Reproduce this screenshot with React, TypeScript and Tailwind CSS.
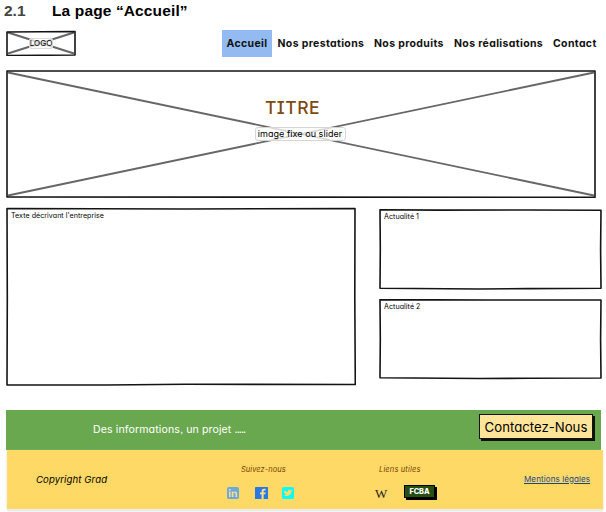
import type { ReactNode } from "react";

const hand = "font-['Inter','Lato',sans-serif] whitespace-nowrap";
const round = "[font-feature-settings:'cv11','ss03']";

type FrameProps = {
  w: number;
  h: number;
  outline: string;
  crossed?: boolean;
  className: string;
  children: ReactNode;
};

function Frame({ w, h, outline, crossed, className, children }: FrameProps) {
  return (
    <div className={`relative shrink-0 ${className}`}>
      <svg className="absolute inset-0" width={w} height={h} viewBox={`0 0 ${w} ${h}`} fill="none">
        {crossed && (
          <path d={`M2 2.5L${w - 2} ${h - 2.5}M2 ${h - 2.5}L${w - 2} 2.5`} stroke="#666" strokeWidth="1.9" />
        )}
        <path d={outline} stroke="#141414" strokeWidth="1.6" strokeLinejoin="round" />
      </svg>
      {children}
    </div>
  );
}

function Nav() {
  return (
    <nav className={`${hand} ${round} flex h-[27px] items-center text-[10.5px] font-bold tracking-[0.35px] text-[#111]`}>
      <a className="flex h-[27px] w-[50px] items-center justify-center bg-[#93bbf2]">Accueil</a>
      <a className="ml-[5.5px] w-[96.5px]">Nos prestations</a>
      <a className="w-[80px]">Nos produits</a>
      <a className="w-[99px]">Nos réalisations</a>
      <a className="w-[45px]">Contact</a>
    </nav>
  );
}

function Socials() {
  return (
    <div className="flex items-center">
      <svg width="12" height="12" viewBox="0 0 12 12">
        <rect width="12" height="12" rx="1.8" fill="#6fa8dc" />
        <path d="M2 4.6h1.6V10H2zM2 2.1h1.6v1.5H2zM4.8 4.6h1.5v.8c.9-1.4 3.8-1.2 3.8 1.3V10H8.5V7c0-1.6-2.1-1.5-2.1 0v3H4.8z" fill="#ffe08a" />
      </svg>
      <svg className="ml-4" width="13" height="12" viewBox="0 0 13 12">
        <rect width="13" height="12" rx=".6" fill="#2b78e4" />
        <path d="M6.600 12V7.200H5V5.500h1.600V4.200c0-1.700 1-2.500 2.500-2.500h1.500v1.700H9.500c-.7 0-.9.3-.9.9v1.200h2.100l-.3 1.700H8.600V12z" fill="#ffe08a" />
      </svg>
      <svg className="ml-[14px]" width="12" height="12" viewBox="0 0 12 12">
        <rect width="12" height="12" rx="1.8" fill="#00ffff" />
        <path d="M2 3c1 1.1 2.1 1.7 3.7 1.8-.3-2 1.8-3 3.1-1.8l1.3-.4-.6 1.1.9-.2-1 1c.1 3.800-4.200 5.700-7.500 3.900 1 0 1.700-.2 2.300-.7-.8-.1-1.300-.5-1.500-1.200h.7C2.500 6.200 2 5.600 2 4.800l.7.2C2 4.500 1.700 3.700 2 3z" fill="#ffd966" />
      </svg>
    </div>
  );
}

export default function App() {
  return (
    <div className="flex h-[512px] w-[606px] flex-col overflow-hidden bg-white text-black">
      <h1 className="flex h-[30px] shrink-0 pl-1 pt-[1px] font-['Liberation_Sans',sans-serif] text-[15.5px] font-bold leading-[20px] whitespace-nowrap">
        <span className="w-[48px] text-[#444]">2.1</span>
        <span className="tracking-[0.13px]">La page “Accueil”</span>
      </h1>

      <header className="flex h-[40px] shrink-0 justify-between pl-[6px] pr-[8px]">
        <Frame w={70} h={26} crossed outline="M1 2L69 1.500V25L1 25.500Z" className="flex h-[26px] w-[70px] items-center justify-center">
          <span className={`${hand} ${round} relative rounded-[2px] border border-[#ddd] bg-white/70 text-[8px] leading-[9px]`}>LOGO</span>
        </Frame>
        <Nav />
      </header>

      <Frame w={590} h={128} crossed outline="M1 1L589 1V127.300L1 127Z" className="ml-[6px] flex h-[128px] w-[590px] flex-col items-center">
        <div className={`${hand} relative mt-[27px] pr-[17px] text-[17.5px] font-medium leading-[22px] tracking-[0.5px] text-[#7f4a10] [font-feature-settings:'cv08']`}>TITRE</div>
        <div className={`${hand} ${round} relative mt-[8px] mr-[2px] flex h-[14px] w-[91px] items-center justify-center rounded-[3px] border border-[#d5d5d5] bg-white/75 text-[9px] tracking-[0.05px]`}>
          image fixe ou slider
        </div>
      </Frame>

      <main className="flex h-[212px] shrink-0 pl-[6px] pt-[9px]">
        <Frame w={350} h={179} outline="M1 1.500L180 2L349 1.500L348.800 90L349.300 177.500L180 177.300L100 178L1 178L1.300 90Z" className="h-[179px] w-[350px]">
          <p className={`${hand} ${round} relative pl-[5px] pt-[4px] text-[7.1px] leading-[10px] tracking-[0.04px]`}>Texte décrivant l'entreprise</p>
        </Frame>
        <section className="ml-[23px] flex flex-col gap-[9px] pt-[2px]">
          <Frame w={223} h={81} outline="M1 .8L60 1.100L150 1L222 1.200L221.600 40L222 79.300L150 79.600L100 80L1 79.300L1.300 40Z" className="h-[81px] w-[223px]">
            <p className={`${hand} ${round} relative pl-[5px] pt-[3px] text-[7.1px] leading-[10px] tracking-[0.05px]`}>Actualité 1</p>
          </Frame>
          <Frame w={223} h={81} outline="M1 .6L110 1L222 1L221.600 40L222 79L150 79.300L100 79.500L1 78.800L1.300 40Z" className="h-[81px] w-[223px]">
            <p className={`${hand} ${round} relative pl-[5px] pt-[3px] text-[7.1px] leading-[10px] tracking-[0.05px]`}>Actualité 2</p>
          </Frame>
        </section>
      </main>

      <section className="ml-[6px] flex h-[40px] w-[595px] shrink-0 justify-between bg-[#6aa84f] pl-[87px] pr-[8px] pt-[4px]">
        <p className={`${hand} ${round} pt-[8px] text-[10.6px] leading-[15px] tracking-[0.1px] text-white`}>
          Des informations, un projet <span className="tracking-[-0.9px]">.....</span>
        </p>
        <button className={`${hand} ${round} h-[25px] w-[114px] border-[1.500px] border-[#141414] bg-[#ffe599] text-[13.2px] leading-[22px] shadow-[2px_2px_0_#111]`}>
          Contactez-Nous
        </button>
      </section>

      <footer className={`${hand} ${round} ml-[7px] flex h-[60px] w-[596px] shrink-0 border-b border-[#eee] bg-[#ffd966] shadow-[0_1px_2px_#ddd]`}>
        <p className="w-[213px] pl-[29px] pt-[23px] text-[9.6px] italic leading-[14px] tracking-[0.1px]">Copyright Grad</p>
        <div className="w-[155px]">
          <p className="pb-[12px] pl-[21px] pt-[15px] text-[7.500px] italic leading-[10px] tracking-[0.05px] text-[#783f04]">Suivez-nous</p>
          <div className="pl-[7px]"><Socials /></div>
        </div>
        <div className="w-[149px]">
          <p className="pb-[9px] pl-[4px] pt-[15px] text-[7.500px] italic leading-[10px] tracking-[0.15px] text-[#783f04]">Liens utiles</p>
          <div className="flex">
            <span className="w-[29px] pt-[2px] font-['Liberation_Serif',serif] text-[13px] leading-[15px] text-[#222]">W</span>
            <span className="mt-[1px] h-[13px] w-[31px] border border-black bg-[#274e13] text-center text-[7.3px] font-extrabold leading-[11px] text-white shadow-[2px_2px_0_#000]">FCBA</span>
          </div>
        </div>
        <a className="pt-[24px] text-[8.1px] leading-[11px] tracking-[0.06px] text-[#1c4587] underline underline-offset-1">Mentions légales</a>
      </footer>
    </div>
  );
}
